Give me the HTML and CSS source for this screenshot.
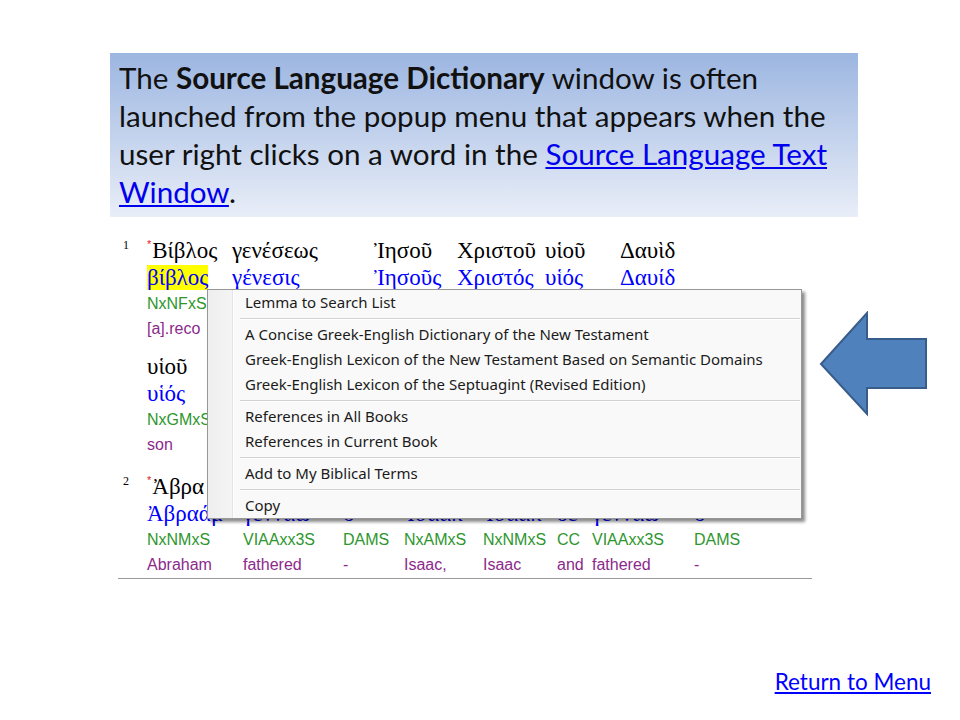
FILE: index.html
```html
<!DOCTYPE html>
<html>
<head>
<meta charset="utf-8">
<link rel="stylesheet" href="styles.css">
</head>
<body>
<div class="slide">
  <div class="callout">The <b>Source Language Dictionary</b> window is often<br>launched from the popup menu that appears when the<br>user right clicks on a word in the <a href="#">Source Language Text<br>Window</a>.</div>
  <div class="stage">
    <div class="interlinear">
      <div class="verse va">
        <span class="vnum">1</span>
        <div class="words">
          <div class="word"><div class="gk"><span class="ast">*</span>Βίβλος</div><div class="lem"><span class="hl">βίβλος</span></div><div class="mor">NxNFxS</div><div class="gl">[a].reco</div></div>
          <div class="word"><div class="gk">γενέσεως</div><div class="lem">γένεσις</div></div>
          <div class="word"><div class="gk">Ἰησοῦ</div><div class="lem">Ἰησοῦς</div></div>
          <div class="word"><div class="gk">Χριστοῦ</div><div class="lem">Χριστός</div></div>
          <div class="word"><div class="gk">υἱοῦ</div><div class="lem">υἱός</div></div>
          <div class="word"><div class="gk">Δαυὶδ</div><div class="lem">Δαυίδ</div></div>
        </div>
      </div>
      <div class="verse vb">
        <span class="vnum"></span>
        <div class="words">
          <div class="word"><div class="gk">υἱοῦ</div><div class="lem">υἱός</div><div class="mor">NxGMxS</div><div class="gl">son</div></div>
        </div>
      </div>
      <div class="verse vc">
        <span class="vnum">2</span>
        <div class="words">
          <div class="word"><div class="gk"><span class="ast">*</span>Ἀβρα</div><div class="lem">Ἀβραάμ</div><div class="mor">NxNMxS</div><div class="gl">Abraham</div></div>
          <div class="word"><div class="gk"></div><div class="lem">γεννάω</div><div class="mor">VIAAxx3S</div><div class="gl">fathered</div></div>
          <div class="word"><div class="gk"></div><div class="lem">ὁ</div><div class="mor">DAMS</div><div class="gl">-</div></div>
          <div class="word"><div class="gk"></div><div class="lem">Ἰσαάκ</div><div class="mor">NxAMxS</div><div class="gl">Isaac,</div></div>
          <div class="word"><div class="gk"></div><div class="lem">Ἰσαάκ</div><div class="mor">NxNMxS</div><div class="gl">Isaac</div></div>
          <div class="word"><div class="gk"></div><div class="lem">δέ</div><div class="mor">CC</div><div class="gl">and</div></div>
          <div class="word"><div class="gk"></div><div class="lem">γεννάω</div><div class="mor">VIAAxx3S</div><div class="gl">fathered</div></div>
          <div class="word"><div class="gk"></div><div class="lem">ὁ</div><div class="mor">DAMS</div><div class="gl">-</div></div>
        </div>
      </div>

      <div class="menu">
        <div class="item">Lemma to Search List</div>
        <div class="sep"></div>
        <div class="item">A Concise Greek-English Dictionary of the New Testament</div>
        <div class="item">Greek-English Lexicon of the New Testament Based on Semantic Domains</div>
        <div class="item">Greek-English Lexicon of the Septuagint (Revised Edition)</div>
        <div class="sep"></div>
        <div class="item">References in All Books</div>
        <div class="item">References in Current Book</div>
        <div class="sep"></div>
        <div class="item">Add to My Biblical Terms</div>
        <div class="sep"></div>
        <div class="item">Copy</div>
      </div>
    </div>
    <svg class="arrow" width="110" height="106" viewBox="0 0 110 106">
      <polygon points="2,53 48,2 48,28 107,28 107,77 48,77 48,103" fill="#4f81bd" stroke="#385d8a" stroke-width="2" stroke-linejoin="miter"/>
    </svg>
  </div>
  <a class="return" href="#">Return to Menu</a>
</div>
</body>
</html>
```

FILE: styles.css
```css
html, body {
  margin: 0;
  padding: 0;
  background: #ffffff;
}

.slide {
  width: 960px;
  height: 720px;
  box-sizing: border-box;
  padding: 53px 0 0 110px;
  display: flex;
  flex-direction: column;
  overflow: hidden;
}

.callout {
  width: 748px;
  height: 164px;
  box-sizing: border-box;
  padding: 6px 10px 6px 9px;
  background: linear-gradient(#9cb6e1, #e9eef8);
  font-family: Lato, "Liberation Sans", sans-serif;
  font-size: 29.6px;
  line-height: 38px;
  color: #111111;
  white-space: nowrap;
}

.callout b {
  font-weight: 700;
}

.callout a {
  color: #0000ee;
  text-decoration: underline;
}

.stage {
  display: flex;
  margin-top: 20px;
  margin-left: 8px;
}

.interlinear {
  position: relative;
  width: 694px;
  border-bottom: 1px solid #9a9a9a;
  padding-bottom: 1px;
}

.verse {
  display: flex;
}

.vb {
  margin-top: 12px;
}

.vc {
  margin-top: 16px;
}

.vnum {
  width: 29px;
  flex: none;
  box-sizing: border-box;
  padding-left: 5px;
  padding-top: 2px;
  font-family: "Liberation Serif", serif;
  font-size: 12px;
  line-height: 12px;
  color: #000;
}

.words {
  display: grid;
}

.va .words {
  grid-template-columns: 85px 142px 83px 88px 75px 60px;
}

.vb .words {
  grid-template-columns: 85px;
}

.vc .words {
  grid-template-columns: 96px 100px 61px 79px 74px 35px 102px 60px;
}

.word > div {
  white-space: nowrap;
}

.gk, .lem {
  font-family: "Liberation Serif", "DejaVu Serif", serif;
  font-size: 23px;
}

.gk {
  height: 28px;
  line-height: 28px;
  color: #000000;
}

.lem {
  height: 26px;
  line-height: 26px;
  color: #0000ff;
}

.hl {
  background: #ffff00;
}

.ast {
  color: #e02020;
  font-family: "Liberation Sans", sans-serif;
  font-size: 11px;
  vertical-align: top;
  line-height: 14px;
  margin-right: 1px;
}

.mor, .gl {
  font-family: "Liberation Sans", Arial, sans-serif;
  font-size: 16px;
  height: 25px;
  line-height: 25px;
}

.mor {
  color: #2e962e;
}

.gl {
  color: #8b2a8b;
}

.menu {
  position: absolute;
  z-index: 2;
  left: 89px;
  top: 52px;
  width: 595px;
  height: 230px;
  box-sizing: border-box;
  border: 1px solid #979797;
  background: linear-gradient(to right, #eeeeee 0, #f4f4f4 24px, #e4e4e4 24px, #e4e4e4 25px, #ffffff 25px, #ffffff 26px, #f9f9f9 26px);
  box-shadow: 3px 3px 3px rgba(0, 0, 0, 0.45);
  font-family: "Noto Sans", "Open Sans", sans-serif;
  font-size: 15px;
  color: #1b1b1b;
  overflow: hidden;
}

.item {
  height: 25px;
  line-height: 25px;
  padding-left: 37px;
  white-space: nowrap;
}

.sep {
  height: 4px;
  padding-top: 3px;
  margin-left: 32px;
  margin-right: 1px;
}

.sep::before {
  content: "";
  display: block;
  height: 1px;
  background: #d2d2d2;
  border-bottom: 1px solid #ffffff;
}

.arrow {
  flex: none;
  margin-top: 74px;
  margin-left: 7px;
}

.return {
  margin-top: auto;
  align-self: flex-end;
  margin-right: 29px;
  margin-bottom: 25px;
  font-family: Lato, "Liberation Sans", sans-serif;
  font-size: 22.5px;
  color: #0000ff;
  text-decoration: underline;
}
```
